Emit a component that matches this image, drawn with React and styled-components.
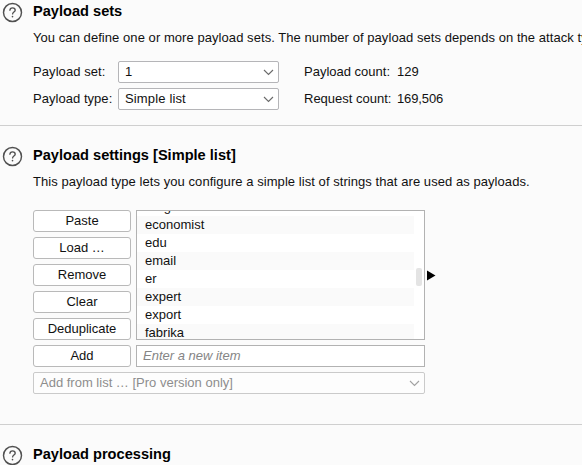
import React from "react";
import styled, { createGlobalStyle } from "styled-components";

const GlobalStyle = createGlobalStyle`
  * { box-sizing: border-box; }
  body {
    margin: 0;
    background: #fbfbfb;
    color: #111;
    font: 13px/16px "Liberation Sans", Arial, sans-serif;
    overflow: hidden;
  }
`;

const Page = styled.main`
  height: 465px;
  overflow: hidden;
`;

const Section = styled.section`
  display: grid;
  grid-template-columns: 33px 1fr;
  height: ${(p) => p.$height}px;
  padding-top: ${(p) => p.$top}px;
  border-bottom: 1px solid #cfcfcf;
`;

const HelpIcon = styled.svg`
  width: 21px;
  height: 21px;
  margin-left: 2px;
  fill: none;
  stroke: #505050;
  stroke-linecap: round;
  stroke-linejoin: round;
`;

const Title = styled.h2`
  margin: 0;
  font-size: 14.6px;
  line-height: 18px;
  font-weight: bold;
  color: #000;
  white-space: nowrap;
`;

const Description = styled.p`
  margin: 10px 0 0;
  letter-spacing: 0.06px;
  white-space: nowrap;
`;

const SetGrid = styled.div`
  display: grid;
  grid-template-columns: 85px 161px 25px 93px 1fr;
  grid-auto-rows: 22px;
  row-gap: 5px;
  align-items: center;
  margin-top: 15px;
`;

const Label = styled.span`
  grid-column: ${(p) => p.$column};
  letter-spacing: ${(p) => p.$spacing || 0}px;
  white-space: nowrap;
`;

const Select = styled.div`
  display: flex;
  align-items: center;
  justify-content: space-between;
  height: 22px;
  padding: 0 4px 0 6px;
  border: 1px solid ${(p) => (p.$disabled ? "#cacaca" : "#b5b5b8")};
  border-radius: 2px;
  background: ${(p) => (p.$disabled ? "#fdfdfd" : "#fff")};
  color: ${(p) => (p.$disabled ? "#8d8d8d" : "#111")};
  letter-spacing: ${(p) => (p.$disabled ? 0 : 0.15)}px;
`;

const Arrow = styled.svg`
  width: 11px;
  height: 7px;
  margin-top: 1px;
  fill: none;
  stroke: ${(p) => (p.$disabled ? "#a2a2a2" : "#6b6b6b")};
  stroke-width: 1.15;
`;

const Editor = styled.div`
  display: grid;
  grid-template-columns: 98px 289px;
  column-gap: 5px;
  row-gap: 5px;
  width: 392px;
  margin-top: 20px;
`;

const Buttons = styled.div`
  display: flex;
  flex-direction: column;
  gap: 5px;
`;

const Button = styled.button`
  width: 98px;
  height: 22px;
  padding: 0 0 1px;
  border: 1px solid #b9b9b9;
  border-radius: 3px;
  background: #fff;
  color: #111;
  font: inherit;
  line-height: 18px;
`;

const ListFrame = styled.div`
  position: relative;
  height: 130px;
`;

const List = styled.ul`
  display: flex;
  flex-direction: column;
  justify-content: flex-end;
  height: 130px;
  margin: 0;
  padding: 0;
  overflow: hidden;
  list-style: none;
  border: 1px solid #b2b2b2;
  background: #fff;
`;

const Item = styled.li`
  flex: 0 0 18px;
  width: 277px;
  padding-left: 8px;
  line-height: 18px;
  background: ${(p) => (p.$shaded ? "#fafafa" : "#fff")};
  &:last-child { margin-bottom: -3px; }
`;

const Thumb = styled.span`
  position: absolute;
  top: 58px;
  right: 3px;
  width: 6px;
  height: 18px;
  border-radius: 2px;
  background: #e4e4e4;
`;

const Marker = styled.svg`
  position: absolute;
  top: 60px;
  left: 291px;
  width: 9px;
  height: 11px;
`;

const NewItem = styled.input`
  width: 289px;
  height: 22px;
  padding: 0 6px 1px;
  border: 1px solid #b2b2b2;
  border-radius: 0;
  background: #fff;
  font: inherit;
  &::placeholder { color: #858585; font-style: italic; opacity: 1; }
`;

const ListPicker = styled(Select)`
  grid-column: 1 / -1;
`;

const Help = () => (
  <HelpIcon viewBox="0 0 21 21">
    <circle cx="10.5" cy="10.5" r="9" strokeWidth="1.45" />
    <path d="M7.9 8.2C8 6.7 9 5.9 10.5 5.9s2.7.9 2.7 2.3c0 1.8-2.6 1.9-2.6 3.7" strokeWidth="1.35" />
    <path d="M10.5 14.6v.2" strokeWidth="1.6" />
  </HelpIcon>
);

const Chevron = ({ disabled }) => (
  <Arrow viewBox="0 0 11 7" $disabled={disabled}>
    <path d="M1 1l4.5 4.5L10 1" />
  </Arrow>
);

const actions = ["Paste", "Load …", "Remove", "Clear", "Deduplicate"];
const payloads = ["drug", "economist", "edu", "email", "er", "expert", "export", "fabrika"];

export default function App() {
  return (
    <Page>
      <GlobalStyle />
      <Section $height={126} $top={2}>
        <Help />
        <div>
          <Title>Payload sets</Title>
          <Description>
            You can define one or more payload sets. The number of payload sets depends on the attack type
          </Description>
          <SetGrid>
            <Label $column={1} $spacing={0.08}>Payload set:</Label>
            <Select>1<Chevron /></Select>
            <Label $column={4}>Payload count:</Label>
            <Label $column={5}>129</Label>
            <Label $column={1} $spacing={0.04}>Payload type:</Label>
            <Select>Simple list<Chevron /></Select>
            <Label $column={4}>Request count:</Label>
            <Label $column={5} $spacing={-0.12}>169,506</Label>
          </SetGrid>
        </div>
      </Section>
      <Section $height={299} $top={20}>
        <Help />
        <div>
          <Title>Payload settings [Simple list]</Title>
          <Description>
            This payload type lets you configure a simple list of strings that are used as payloads.
          </Description>
          <Editor>
            <Buttons>
              {actions.map((action) => <Button key={action}>{action}</Button>)}
            </Buttons>
            <ListFrame>
              <List>
                {payloads.map((payload, i) => (
                  <Item key={payload} $shaded={i % 2 === 1}>{payload}</Item>
                ))}
              </List>
              <Thumb />
              <Marker viewBox="0 0 9 11"><path d="M0 .5L8.5 5.5 0 10.5z" /></Marker>
            </ListFrame>
            <Button>Add</Button>
            <NewItem placeholder="Enter a new item" />
            <ListPicker $disabled>Add from list … [Pro version only]<Chevron disabled /></ListPicker>
          </Editor>
        </div>
      </Section>
      <Section $height={60} $top={20}>
        <Help />
        <Title>Payload processing</Title>
      </Section>
    </Page>
  );
}
